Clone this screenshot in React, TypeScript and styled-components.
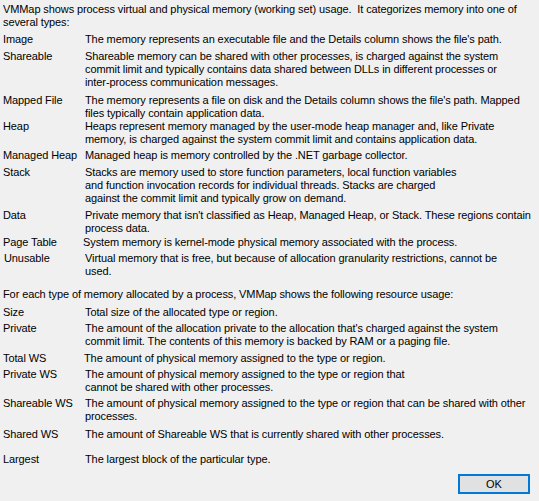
import * as React from 'react';
import styled, { createGlobalStyle } from 'styled-components';

const GlobalStyle = createGlobalStyle`
    html, body {
        margin: 0;
        padding: 0;
        background: #f0f0f0;
    }
`;

// 대화상자 전체
const Dialog = styled.div`
    width: 539px;
    height: 501px;
    box-sizing: border-box;
    display: flex;
    flex-direction: column;
    padding: 3px 0 7px 3px;
    background: #f0f0f0;
    color: #000;
    font-family: 'Liberation Sans', Arial, sans-serif;
    font-size: 11px;
    line-height: 13px;
    letter-spacing: -0.1px;
`;

const Paragraph = styled.div<{ $gap?: number }>`
    margin-top: ${p => p.$gap || 0}px;
    white-space: nowrap;
`;

// 항목 한 줄: 이름 + 설명
const Row = styled.div<{ $gap: number }>`
    display: grid;
    grid-template-columns: 82px 1fr;
    margin-top: ${p => p.$gap}px;
    white-space: nowrap;
`;

const Label = styled.div<{ $shift?: number }>`
    padding-left: ${p => p.$shift || 0}px;
`;

const Description = styled.div<{ $shift?: number }>`
    margin-left: ${p => p.$shift || 0}px;
`;

const Footer = styled.div`
    margin-top: auto;
    display: flex;
    justify-content: flex-end;
    padding-right: 9px;
`;

const Button = styled.button`
    width: 72px;
    height: 20px;
    box-sizing: border-box;
    border: 2px solid #0078d7;
    background: #e1e1e1;
    font-family: 'Liberation Sans', Arial, sans-serif;
    font-size: 11px;
    color: #000;
    padding: 0;
    cursor: pointer;
`;

interface Entry {
    name: string;
    lines: string[];
    gap: number;
    labelShift?: number;
    descShift?: number;
}

const types: Entry[] = [
    { name: 'Image', gap: 4, lines: ["The memory represents an executable file and the Details column shows the file's path."] },
    {
        name: 'Shareable', gap: 4, lines: [
            'Shareable memory can be shared with other processes, is charged against the system',
            'commit limit and typically contains data shared between DLLs in different processes or',
            'inter-process communication messages.',
        ],
    },
    {
        name: 'Mapped File', gap: 5, lines: [
            "The memory represents a file on disk and the Details column shows the file's path. Mapped",
            'files typically contain application data.',
        ],
    },
    {
        name: 'Heap', gap: 0, lines: [
            'Heaps represent memory managed by the user-mode heap manager and, like Private',
            'memory, is charged against the system commit limit and contains application data.',
        ],
    },
    { name: 'Managed Heap', gap: 3, lines: ['Managed heap is memory controlled by the .NET garbage collector.'] },
    {
        name: 'Stack', gap: 4, lines: [
            'Stacks are memory used to store function parameters, local function variables',
            'and function invocation records for individual threads. Stacks are charged',
            'against the commit limit and typically grow on demand.',
        ],
    },
    {
        name: 'Data', gap: 4, lines: [
            "Private memory that isn't classified as Heap, Managed Heap, or Stack. These regions contain",
            'process data.',
        ],
    },
    { name: 'Page Table', gap: 1, descShift: -2, lines: ['System memory is kernel-mode physical memory associated with the process.'] },
    {
        name: 'Unusable', gap: 3, labelShift: 1, lines: [
            'Virtual memory that is free, but because of allocation granularity restrictions, cannot be',
            'used.',
        ],
    },
];

const usage: Entry[] = [
    { name: 'Size', gap: 5, lines: ['Total size of the allocated type or region.'] },
    {
        name: 'Private', gap: 3, lines: [
            "The amount of the allocation private to the allocation that's charged against the system",
            'commit limit. The contents of this memory is backed by RAM or a paging file.',
        ],
    },
    { name: 'Total WS', gap: 4, descShift: -1, lines: ['The amount of physical memory assigned to the type or region.'] },
    {
        name: 'Private WS', gap: 3, lines: [
            'The amount of physical memory assigned to the type or region that',
            'cannot be shared with other processes.',
        ],
    },
    {
        name: 'Shareable WS', gap: 3, lines: [
            'The amount of physical memory assigned to the type or region that can be shared with other',
            'processes.',
        ],
    },
    { name: 'Shared WS', gap: 5, lines: ['The amount of Shareable WS that is currently shared with other processes.'] },
    { name: 'Largest', gap: 12, lines: ['The largest block of the particular type.'] },
];

const EntryRow: React.FC<{ entry: Entry }> = ({ entry }) => (
    <Row $gap={entry.gap}>
        <Label $shift={entry.labelShift}>{entry.name}</Label>
        <Description $shift={entry.descShift}>
            {entry.lines.map(line => <div key={line}>{line}</div>)}
        </Description>
    </Row>
);

const App: React.FC = () => (
    <>
        <GlobalStyle />
        <Dialog>
            <Paragraph>
                <div>VMMap shows process virtual and physical memory (working set) usage.&nbsp; It categorizes memory into one of</div>
                <div>several types:</div>
            </Paragraph>
            {types.map(t => <EntryRow key={t.name} entry={t} />)}
            <Paragraph $gap={10}>
                For each type of memory allocated by a process, VMMap shows the following resource usage:
            </Paragraph>
            {usage.map(u => <EntryRow key={u.name} entry={u} />)}
            <Footer>
                <Button>OK</Button>
            </Footer>
        </Dialog>
    </>
);

export default App;
